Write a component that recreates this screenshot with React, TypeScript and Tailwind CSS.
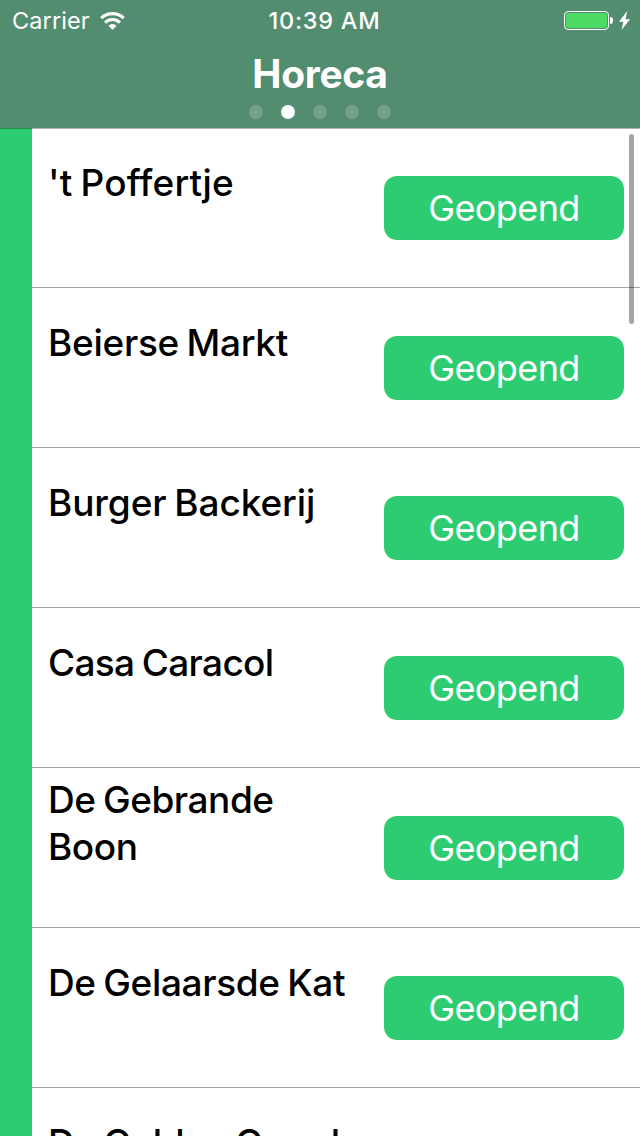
const places = [
  { name: "'t Poffertje", status: "Geopend", tracking: "tracking-[0.15px]" },
  { name: "Beierse Markt", status: "Geopend", tracking: "tracking-[-0.3px]" },
  { name: "Burger Backerij", status: "Geopend", tracking: "tracking-[-0.1px]" },
  { name: "Casa Caracol", status: "Geopend", tracking: "tracking-[-0.65px]" },
  { name: "De Gebrande Boon", status: "Geopend", tracking: "tracking-[-0.45px]" },
  { name: "De Gelaarsde Kat", status: "Geopend", tracking: "tracking-[-0.35px]" },
  { name: "De Gulden Gaarde", status: "Geopend", tracking: "tracking-[-0.3px]" },
];

function StatusBar() {
  return (
    <div className="grid h-10 grid-cols-3 items-center pl-3 pr-2.5">
      <div className="flex items-center gap-2.5">
        <span className="pt-px text-[23.5px] leading-10 tracking-[0.1px]">
          Carrier
        </span>
        <svg width="25" height="18" viewBox="0 0 25 18" fill="none">
          <path d="M1.3 6.2a16 16 0 0 1 22.4 0" stroke="#fff" strokeWidth="3.2" />
          <path d="M5.1 10.6a10.5 10.5 0 0 1 14.8 0" stroke="#fff" strokeWidth="3" />
          <path d="M12.5 18 8.4 13.8a5.8 5.8 0 0 1 8.2 0z" fill="#fff" />
        </svg>
      </div>
      <span className="pl-[7px] text-center text-[23.5px] font-medium leading-10 tracking-[0.75px] whitespace-nowrap">
        10:39 AM
      </span>
      <div className="flex items-center justify-end">
        <div className="h-[19px] w-[45px] rounded-[4px] border border-white p-px">
          <div className="h-full w-full rounded-[2px] bg-[#4cd964]" />
        </div>
        <div className="ml-px h-[7px] w-[3px] rounded-r-full bg-white" />
        <svg className="ml-1.5" width="11" height="19" viewBox="0 0 11 19">
          <path d="M8.2 0 0 10.8h4.4L2.6 19 11 8.2H6.6z" fill="#fff" />
        </svg>
      </div>
    </div>
  );
}

function Header() {
  return (
    <header className="h-32 shrink-0 bg-[#528d70] text-white">
      <StatusBar />
      <h1 className="mt-2.5 text-center text-[39px] font-bold leading-[48px] tracking-[-0.3px]">
        Horeca
      </h1>
      <div className="mt-[7px] flex justify-center gap-[18px]">
        {[0, 1, 2, 3, 4].map((page) => (
          <span
            key={page}
            className={
              page === 1
                ? "size-3.5 rounded-full bg-white"
                : "size-3.5 rounded-full bg-white/20"
            }
          />
        ))}
      </div>
    </header>
  );
}

export default function App() {
  return (
    <div className="relative flex h-[1136px] w-[640px] flex-col overflow-hidden bg-white font-['Inter',sans-serif]">
      <Header />
      <div className="flex min-h-0 flex-1 overflow-hidden">
        <div className="w-8 shrink-0 bg-[#2ecc71]" />
        <ul className="flex-1">
          {places.map((place) => (
            <li
              key={place.name}
              className="flex h-40 items-start justify-between border-b border-[#a5a5a7] pl-4 pr-4"
            >
              <div className="flex h-[109px] w-[314px] items-center">
                <span
                  className={`text-[37px] font-medium leading-[47px] text-black [word-spacing:-2px] ${place.tracking}`}
                >
                  {place.name}
                </span>
              </div>
              <button className="-ml-4 mt-12 h-16 w-60 shrink-0 rounded-[13px] bg-[#2ecc71] text-[36px] leading-[64px] tracking-[-0.6px] text-white">
                {place.status}
              </button>
            </li>
          ))}
        </ul>
      </div>
      {/* Hairline under the header */}
      <div className="absolute inset-x-0 top-32 h-px bg-black/30" />
      {/* Scroll indicator */}
      <div className="absolute right-[6px] top-[134px] h-[190px] w-[5px] rounded-full bg-black/35" />
    </div>
  );
}
